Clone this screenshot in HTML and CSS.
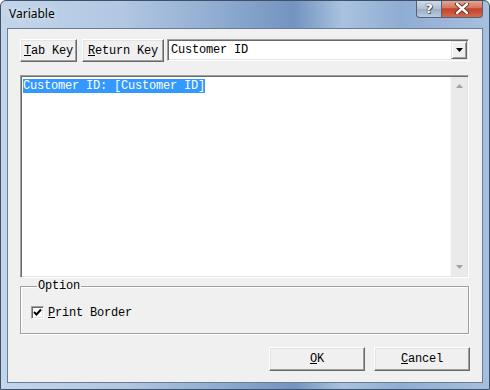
FILE: index.html
```html
<!DOCTYPE html>
<html lang="en">
<head>
    <meta charset="UTF-8">
    <title>Variable</title>
    <link rel="stylesheet" href="styles.css">
</head>
<body>
    <div class="window">
        <div class="titlebar">
            <span class="title">Variable</span>
            <div class="caption">
                <span class="cap-btn help">?</span>
                <span class="cap-btn close">
                    <svg width="16" height="11" viewBox="0 0 16 11">
                        <path d="M3 1 L13 10 M13 1 L3 10" stroke="#5a2418" stroke-width="4.2" stroke-linecap="round"/>
                        <path d="M3 1 L13 10 M13 1 L3 10" stroke="#fff" stroke-width="2.4" stroke-linecap="round"/>
                    </svg>
                </span>
            </div>
        </div>
        <div class="client">
            <div class="toolbar">
                <button class="btn btn-tab"><u>T</u>ab Key</button>
                <button class="btn btn-ret"><u>R</u>eturn Key</button>
                <div class="combo">
                    <span class="combo-text">Customer ID</span>
                    <span class="combo-arrow">
                        <svg width="7" height="4" viewBox="0 0 7 4"><path d="M0 0 H7 L3.5 4 Z" fill="#000"/></svg>
                    </span>
                </div>
            </div>
            <div class="editor">
                <div class="editor-text"><span class="sel">Customer ID: [Customer ID]</span></div>
                <div class="scrollbar">
                    <svg width="7" height="4" viewBox="0 0 7 4"><path d="M0 4 H7 L3.5 0 Z" fill="#a3a3a3"/></svg>
                    <svg width="7" height="4" viewBox="0 0 7 4"><path d="M0 0 H7 L3.5 4 Z" fill="#a3a3a3"/></svg>
                </div>
            </div>
            <fieldset class="option">
                <legend>Option</legend>
                <label class="check">
                    <span class="box">
                        <svg width="9" height="9" viewBox="0 0 9 9"><path d="M1 4 L3.5 6.5 L8 1.5" stroke="#000" stroke-width="2" fill="none"/></svg>
                    </span>
                    <span><u>P</u>rint Border</span>
                </label>
            </fieldset>
            <div class="actions">
                <button class="btn btn-dlg"><u>O</u>K</button>
                <button class="btn btn-dlg"><u>C</u>ancel</button>
            </div>
        </div>
    </div>
</body>
</html>
```

FILE: styles.css
```css
*{
    margin: 0;
    padding: 0;
    box-sizing: border-box;
}
body{
    background: #fff;
    font-family: 'Liberation Mono', 'DejaVu Sans Mono', monospace;
    font-size: 12px;
    letter-spacing: -0.2px;
    color: #000;
}
.window{
    width: 490px;
    height: 390px;
    display: flex;
    flex-direction: column;
    border: 1px solid #3f5069;
    border-radius: 6px 6px 0 0;
    background: linear-gradient(90deg, #c2d5ea 0%, #b1c7e2 25%, #8eabd0 45%, #7394c0 60%, #a9c2df 70%, #8fadd3 82%, #a7bfde 100%);
    overflow: hidden;
}
.titlebar{
    height: 27px;
    display: flex;
    align-items: flex-start;
    justify-content: space-between;
}
.title{
    font-family: 'Noto Sans', 'Open Sans', sans-serif;
    font-size: 12px;
    letter-spacing: 0;
    padding: 4px 0 0 8px;
    text-shadow: 0 0 6px #fff;
}
.caption{
    display: flex;
    margin-right: 6px;
    margin-top: -1px;
}
.cap-btn{
    height: 18px;
    display: flex;
    align-items: center;
    justify-content: center;
    border: 1px solid #52627a;
    border-top: none;
}
.help{
    width: 25px;
    border-right: none;
    border-radius: 0 0 0 4px;
    background: linear-gradient(#d4deea, #b3c2d4 50%, #98abc2 51%, #bccbdc);
    color: #fff;
    font-family: 'DejaVu Sans', sans-serif;
    font-weight: bold;
    font-size: 13px;
    text-shadow: 0 0 1px #333, 0 0 1px #333, 1px 1px 0 #55667d;
}
.close{
    width: 42px;
    border-radius: 0 0 4px 0;
    background: linear-gradient(#e6ac98, #d5775e 45%, #c2422a 52%, #d2694f);
}
.client{
    flex: 1;
    margin: 0 6px 6px 6px;
    border: 1px solid #6b7d94;
    background: #f0f0f0;
    padding: 10px 13px 11px 12px;
    display: flex;
    flex-direction: column;
}
.toolbar{
    display: flex;
    align-items: flex-start;
    height: 23px;
}
.btn{
    font-family: 'Liberation Mono', 'DejaVu Sans Mono', monospace;
    font-size: 12px;
    letter-spacing: -0.2px;
    background: #f0f0f0;
    color: #000;
    border: 1px solid;
    border-color: #fff #696969 #696969 #fff;
    box-shadow: inset -1px -1px 0 #a0a0a0, inset 1px 1px 0 #e3e3e3;
    height: 23px;
}
.btn-tab{
    width: 57px;
}
.btn-ret{
    width: 82px;
    margin-left: 5px;
}
.combo{
    margin-left: 3px;
    flex: 1;
    height: 22px;
    display: flex;
    align-items: center;
    background: #fff;
    border: 1px solid;
    border-color: #a0a0a0 #fff #fff #a0a0a0;
    box-shadow: inset 1px 1px 0 #696969, inset -1px -1px 0 #e3e3e3;
}
.combo-text{
    flex: 1;
    padding-left: 3px;
}
.combo-arrow{
    width: 16px;
    height: 18px;
    margin-right: 1px;
    display: flex;
    align-items: center;
    justify-content: center;
    background: #f0f0f0;
    border: 1px solid;
    border-color: #e3e3e3 #696969 #696969 #e3e3e3;
    box-shadow: inset 1px 1px 0 #fff, inset -1px -1px 0 #a0a0a0;
}
.editor{
    margin-top: 13px;
    height: 203px;
    display: flex;
    background: #fff;
    border: 1px solid;
    border-color: #a0a0a0 #fff #fff #a0a0a0;
    box-shadow: inset 1px 1px 0 #696969, inset -1px -1px 0 #e3e3e3;
    padding: 1px;
}
.editor-text{
    flex: 1;
    padding: 3px 0 0 1px;
    line-height: 13px;
}
.sel{
    background: #3399ff;
    color: #fff;
}
.scrollbar{
    width: 17px;
    background: #eaeaea;
    border-left: 1px solid #f7f7f7;
    display: flex;
    flex-direction: column;
    justify-content: space-between;
    align-items: center;
    padding: 7px 0;
}
.option{
    margin-top: 1px;
    border: 1px solid #a0a0a0;
    box-shadow: inset 1px 1px 0 #fff, 1px 1px 0 #fff;
    padding: 13px 0 14px 10px;
    min-inline-size: 0;
}
.option legend{
    margin-left: 6px;
    padding: 0 1px;
    line-height: 14px;
}
.check{
    display: flex;
    align-items: center;
    gap: 4px;
    height: 13px;
}
.box{
    width: 13px;
    height: 13px;
    background: #fff;
    border: 1px solid;
    border-color: #a0a0a0 #fff #fff #a0a0a0;
    box-shadow: inset 1px 1px 0 #696969, inset -1px -1px 0 #e3e3e3;
    display: flex;
    align-items: center;
    justify-content: center;
}
.actions{
    margin-top: 13px;
    margin-right: -1px;
    display: flex;
    justify-content: flex-end;
    gap: 9px;
}
.btn-dlg{
    width: 96px;
    height: 24px;
}
```
